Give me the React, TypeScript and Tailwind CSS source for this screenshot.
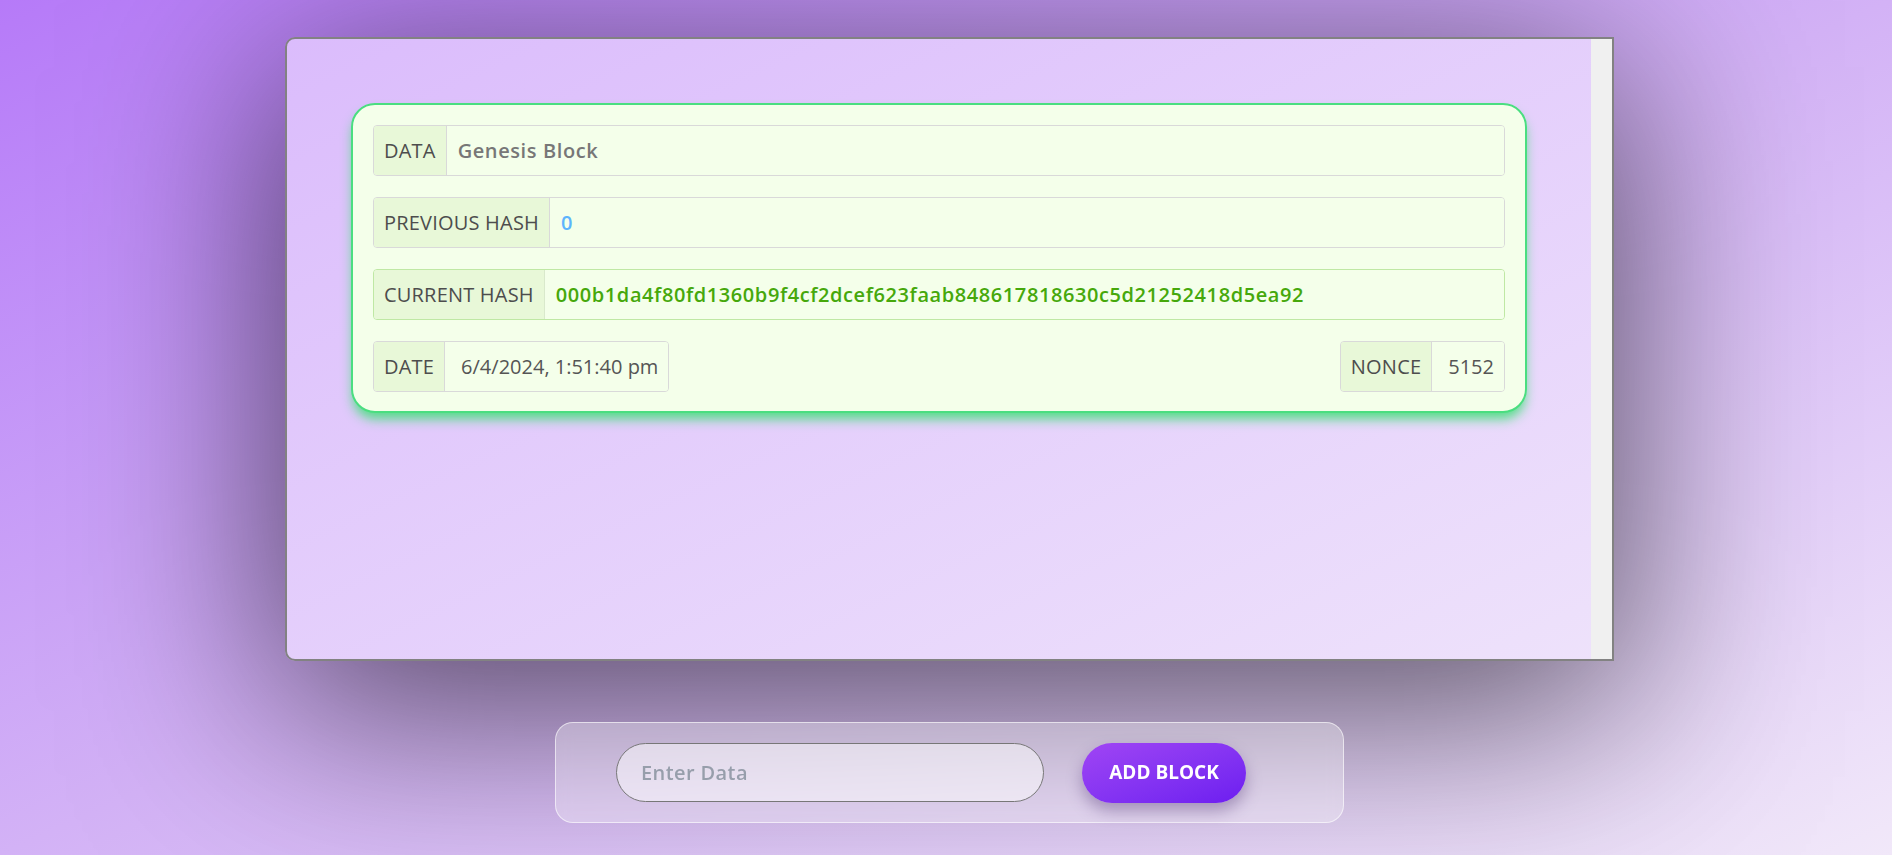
import React from 'react'

const font = { fontFamily: '"Open Sans", "Noto Sans", sans-serif' }

function Row({
    label,
    children,
    green = false,
}: {
    label: string
    children: React.ReactNode
    green?: boolean
}) {
    return (
        <div
            className={`flex h-[51px] items-stretch overflow-hidden rounded-[4px] border ${
                green ? 'border-[#bfe8a4]' : 'border-[#d9d9d9]'
            }`}
        >
            <div
                className={`flex items-center border-r bg-[#e8f8d8] px-[10px] text-[20px] font-medium tracking-[0.2px] text-[#4d4d4d] ${
                    green ? 'border-[#d9e9cc]' : 'border-[#d9d9d9]'
                }`}
            >
                {label}
            </div>
            <div className="flex flex-1 items-center bg-[#f4ffea] pl-[11px] text-[20px]">{children}</div>
        </div>
    )
}

function Pair({ label, value }: { label: string; value: string }) {
    return (
        <div className="flex h-[51px] items-stretch overflow-hidden rounded-[4px] border border-[#d9d9d9]">
            <div className="flex items-center border-r border-[#d9d9d9] bg-[#e8f8d8] px-[10px] text-[20px] font-medium tracking-[0.2px] text-[#4d4d4d]">
                {label}
            </div>
            <div className="flex items-center bg-[#f4ffea] pl-4 pr-[10px] text-[20px] text-[#555]">{value}</div>
        </div>
    )
}

export default function App() {
    return (
        <div
            className="min-h-screen bg-linear-to-br from-[#b67af8] via-[#d3b2f6] to-[#f1e8f9]"
            style={font}
        >
            <div className="flex min-h-screen flex-col items-center gap-[61px] pl-[7px] pt-[37px]">
                <div className="flex h-[624px] w-[1329px] overflow-hidden rounded-l-[10px] border-2 border-[#828282] bg-linear-to-br from-[#dbbcfc] to-[#eee2fb] shadow-[0_40px_200px_10px_rgba(0,0,0,0.6)]">
                    <div className="flex-1 px-[64px] pt-[64px]">
                        <div className="flex flex-col gap-[21px] rounded-[24px] border-2 border-[#4ade80] bg-[#f4ffea] p-5 pb-[19px] shadow-[0_8px_12px_-2px_rgba(74,222,128,0.95)]">
                            <Row label="DATA">
                                <span className="font-semibold tracking-[0.6px] text-[#777]">Genesis Block</span>
                            </Row>
                            <Row label="PREVIOUS HASH">
                                <span className="font-semibold text-[#5db4fd]">0</span>
                            </Row>
                            <Row label="CURRENT HASH" green>
                                <span className="font-semibold tracking-[0.58px] text-[#46a80b]">
                                    000b1da4f80fd1360b9f4cf2dcef623faab848617818630c5d21252418d5ea92
                                </span>
                            </Row>
                            <div className="flex items-center justify-between">
                                <Pair label="DATE" value="6/4/2024, 1:51:40 pm" />
                                <Pair label="NONCE" value="5152" />
                            </div>
                        </div>
                    </div>
                    <div className="w-[21px] bg-[#f0f0f0]" />
                </div>

                <div className="flex h-[101px] w-[789px] items-center gap-[38px] rounded-[18px] border border-white/60 bg-white/30 pl-[60px] backdrop-blur-sm">
                    <input
                        placeholder="Enter Data"
                        className="h-[59px] w-[428px] rounded-full border border-[#777] bg-white/50 px-6 text-[20px] font-semibold tracking-[0.4px] text-[#555] outline-none placeholder:font-semibold placeholder:text-[#979eab]"
                        style={font}
                    />
                    <button
                        className="h-[60px] w-[164px] rounded-full bg-linear-to-br from-[#a044f4] to-[#6d1cf0] text-[19px] font-bold text-white shadow-[0_8px_16px_rgba(60,30,100,0.35)]"
                        style={font}
                    >
                        ADD BLOCK
                    </button>
                </div>
            </div>
        </div>
    )
}
